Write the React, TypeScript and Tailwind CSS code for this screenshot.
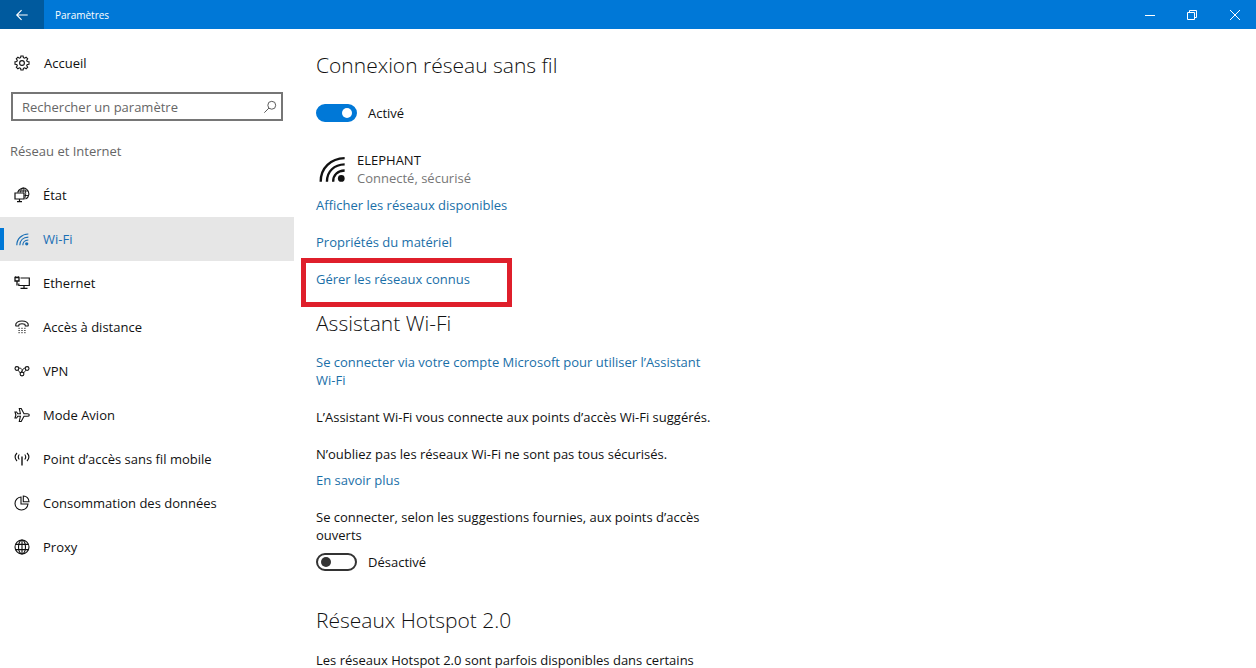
import { useState } from 'react';
import type { ReactNode } from 'react';
import clsx from 'clsx';

function Icon({ size = 16, className, children }: { size?: number; className?: string; children: ReactNode }) {
  return (
    <svg width={size} height={size} viewBox="0 0 16 16" fill="none" stroke="currentColor" strokeWidth="1.1" className={clsx('shrink-0', className)} aria-hidden="true">
      {children}
    </svg>
  );
}

const GearIcon = () => (
  <Icon>
    <path d="M6.9 1h2.2l.3 1.7 1.2.5 1.5-1 1.6 1.6-1 1.5.5 1.2 1.8.3v2.4l-1.8.3-.5 1.2 1 1.5-1.6 1.6-1.5-1-1.2.5L9.1 15H6.900l-.3-1.700-1.200-.5-1.500 1-1.600-1.600 1-1.500-.5-1.200L1 9.200V6.800l1.800-.3.5-1.200-1-1.500 1.600-1.600 1.500 1 1.200-.5z" />
    <circle cx="8" cy="8" r="2.400" />
  </Icon>
);

const StatusIcon = () => (
  <Icon>
    <path d="M3.600 5.500A5.700 5.700 0 1 1 11.500 12" />
    <path d="M6.500 5.500C6.800 2.800 7.900 1 9.200 1s2.500 2.300 2.500 5.500c0 1.900-.3 3.600-.9 4.800M9.200 1v4.500M4.300 4h9.800M10.500 8.500h4" strokeWidth=".9" />
    <path d="M1 6h9v6H1zM5.500 12v2.500M3 14.700h5" strokeWidth="1.200" />
  </Icon>
);

const WifiIcon = ({ size = 16 }: { size?: number }) => (
  <Icon size={size}>
    <path d="M1 15.200C1 7 7 1.500 15.200 1.300M4.700 15.200C4.700 9 9 5.200 15.200 5M8.400 15.200C8.400 11.200 11.200 8.800 15.200 8.600" strokeWidth="1.400" />
    <circle cx="13.200" cy="13.300" r="2" fill="currentColor" stroke="none" />
  </Icon>
);

const EthernetIcon = () => (
  <Icon>
    <path d="M6.500 3h8.800v7.500H4.800V8.500M10 10.500V13M6.500 13.300h7" strokeWidth="1.200" />
    <path d="M1 2.500h4v3.500H1zM3 6v4.500M1.700 1.200v1.300M4.300 1.200v1.300" strokeWidth="1.300" />
  </Icon>
);

const DialupIcon = () => (
  <Icon>
    <path d="M1.700 6.300C1.500 3.500 4.300 2 8 2s6.500 1.500 6.300 4.300l-.3.700h-2.700l-.5-1.800Q8 4.400 5.200 5.200L4.700 7H2z" />
    <path d="M4.500 9.300h1.200M7.400 9.300h1.200M10.300 9.300h1.200M4.500 11.500h1.200M7.400 11.500h1.200M10.300 11.500h1.200M4.500 13.700h1.200M7.400 13.700h1.200M10.300 13.700h1.200" strokeWidth="1" />
  </Icon>
);

const VpnIcon = () => (
  <Icon>
    <circle cx="2.900" cy="5.500" r="1.900" />
    <circle cx="13.100" cy="5.500" r="1.900" />
    <circle cx="8" cy="11" r="1.900" />
    <path d="M4.800 5C7 5 8.200 6 8.200 7.500S7 9 6.500 9.800M11.200 5C9.500 5 8.500 6.500 7.700 8.800M4.200 7.200 6.200 10M11.900 7.200 9.700 9.900" strokeWidth=".9" />
  </Icon>
);

const PlaneIcon = () => (
  <Icon>
    <path d="M15.300 8c0-.8-.9-1.300-2-1.300H10L7.200 1.500H5.300l1.100 5.200H3.800L2.600 5H1l.9 3L1 11h1.600l1.200-1.700h2.600L5.300 14.500h1.900L10 9.300h3.300c1.100 0 2-.5 2-1.300z" />
  </Icon>
);

const HotspotIcon = () => (
  <Icon>
    <path d="M3 2Q-.8 6 3 10M5.300 3.500Q3.200 6 5.300 8.500M13 2Q16.800 6 13 10M10.700 3.500Q12.800 6 10.700 8.500" />
    <path d="M8 5.500V14.500" strokeWidth="1.400" />
  </Icon>
);

const DataIcon = () => (
  <Icon>
    <path d="M7 2A6.500 6.500 0 1 0 14 9H7z" />
    <path d="M9.300 1A5.600 5.600 0 0 1 15 6.700H9.300z" />
  </Icon>
);

const GlobeIcon = () => (
  <Icon>
    <circle cx="8" cy="8" r="7" />
    <ellipse cx="8" cy="8" rx="3.500" ry="7" />
    <path d="M8 1v14M1.800 5.400h12.400M1.800 10.600h12.400" />
  </Icon>
);

const navItems = [
  { label: 'État', icon: <StatusIcon /> },
  { label: 'Wi-Fi', icon: <WifiIcon size={13} />, active: true },
  { label: 'Ethernet', icon: <EthernetIcon /> },
  { label: 'Accès à distance', icon: <DialupIcon /> },
  { label: 'VPN', icon: <VpnIcon /> },
  { label: 'Mode Avion', icon: <PlaneIcon /> },
  { label: 'Point d’accès sans fil mobile', icon: <HotspotIcon /> },
  { label: 'Consommation des données', icon: <DataIcon /> },
  { label: 'Proxy', icon: <GlobeIcon /> },
];

function TitleBar() {
  return (
    <header className="flex h-[29px] shrink-0 items-stretch bg-[#0078d7] text-white">
      <button aria-label="Retour" className="flex w-11 items-center justify-center bg-[#005a9e]">
        <Icon size={14}>
          <path d="M14.500 8H2M7.500 2.500 2 8l5.500 5.500" strokeWidth="1.300" />
        </Icon>
      </button>
      <span className="flex flex-1 items-center pl-[11px] text-[10px]">Paramètres</span>
      <button aria-label="Réduire" className="flex w-[42px] items-center justify-center">
        <svg width="10" height="10" viewBox="0 0 10 10" stroke="currentColor"><path d="M0 5.500h10" /></svg>
      </button>
      <button aria-label="Restaurer" className="flex w-[42px] items-center justify-center">
        <svg width="10" height="10" viewBox="0 0 10 10" fill="none" stroke="currentColor"><path d="M.5 2.500h7v7h-7zM2.500 2.500v-2h7v7h-2" /></svg>
      </button>
      <button aria-label="Fermer" className="flex w-[43px] items-center justify-center">
        <svg width="10" height="10" viewBox="0 0 10 10" stroke="currentColor"><path d="M0 0l10 10M10 0 0 10" /></svg>
      </button>
    </header>
  );
}

function Sidebar() {
  return (
    <aside className="w-[294px] shrink-0 pt-3">
      <a href="#accueil" className="flex h-11 items-center gap-[14px] pl-[14px]">
        <GearIcon />
        Accueil
      </a>
      <label className="mx-[11px] mt-[7px] flex h-[29px] items-center border-2 border-[#767676] pr-1 pl-[9px]">
        <input type="text" aria-label="Rechercher un paramètre" placeholder="Rechercher un paramètre" className="min-w-0 flex-1 outline-none placeholder:text-[#666]" />
        <Icon size={14} className="text-[#555]">
          <circle cx="10" cy="6" r="4.500" />
          <path d="M6.800 9.200 1.500 14.500" />
        </Icon>
      </label>
      <h2 className="mt-[21px] pl-[10px] text-[#666]">Réseau et Internet</h2>
      <nav className="mt-[13px]">
        {navItems.map(item => (
          <a
            key={item.label}
            href="#"
            aria-current={item.active ? 'page' : undefined}
            className={clsx('flex h-11 items-center', item.active && 'bg-[#e6e6e6] text-[#1a6fb5]')}
          >
            <span className={clsx('mr-[10px] h-[22px] w-1', item.active && 'bg-[#0078d7]')} />
            <span className="mr-[13px] flex w-4 justify-center">{item.icon}</span>
            {item.label}
          </a>
        ))}
      </nav>
    </aside>
  );
}

function Toggle({ label, initial }: { label: string; initial: boolean }) {
  const [on, setOn] = useState(initial);
  return (
    <label className="flex h-5 items-center gap-[11px]">
      <input
        type="checkbox"
        role="switch"
        checked={on}
        onChange={() => setOn(!on)}
        className="flex h-[18px] w-[41px] appearance-none items-center rounded-full border-2 border-[#333] px-[3px] before:size-[10px] before:rounded-full before:bg-[#333] checked:justify-end checked:border-[#0078d7] checked:bg-[#0078d7] checked:before:bg-white"
      />
      {label}
    </label>
  );
}

function TextLink({ children }: { children: ReactNode }) {
  return <a href="#" className="text-[#1a6fa8]">{children}</a>;
}

export default function App() {
  return (
    <div className="flex h-screen flex-col overflow-hidden bg-white font-['Open_Sans','Noto_Sans',sans-serif] text-[13px] leading-[18px] text-[#111]">
      <TitleBar />
      <div className="flex min-h-0 flex-1">
        <Sidebar />
        <main className="min-w-0 flex-1 overflow-hidden pt-[22px] pl-[22px]">
          <div className="max-w-[404px]">
            <h1 className="text-[21px] leading-7 font-light">Connexion réseau sans fil</h1>
            <div className="mt-6">
              <Toggle label="Activé" initial />
            </div>
            <div className="mt-7 flex items-center gap-[11px] pl-[3px]">
              <WifiIcon size={27} />
              <div>
                <p>ELEPHANT</p>
                <p className="text-[#777]">Connecté, sécurisé</p>
              </div>
            </div>
            <ul className="mt-[9px] space-y-[19px]">
              <li><TextLink>Afficher les réseaux disponibles</TextLink></li>
              <li><TextLink>Propriétés du matériel</TextLink></li>
              <li className="relative">
                <TextLink>Gérer les réseaux connus</TextLink>
                <span className="pointer-events-none absolute -top-3 -left-[15px] h-[49px] w-[211px] border-5 border-[#df1f2b]" />
              </li>
            </ul>

            <h2 className="mt-[21px] text-[21px] leading-7 font-light">Assistant Wi-Fi</h2>
            <p className="mt-4">
              <TextLink>
                Se connecter via votre compte Microsoft pour utiliser l’Assistant <span className="whitespace-nowrap">Wi-Fi</span>
              </TextLink>
            </p>
            <p className="mt-[19px]">L’Assistant Wi-Fi vous connecte aux points d’accès Wi-Fi suggérés.</p>
            <p className="mt-[19px]">N’oubliez pas les réseaux Wi-Fi ne sont pas tous sécurisés.</p>
            <p className="mt-2"><TextLink>En savoir plus</TextLink></p>
            <p className="mt-[19px]">Se connecter, selon les suggestions fournies, aux points d’accès ouverts</p>
            <div className="mt-2">
              <Toggle label="Désactivé" initial={false} />
            </div>

            <h2 className="mt-[34px] text-[21px] leading-7 font-light">Réseaux Hotspot 2.0</h2>
            <p className="mt-[17px]">Les réseaux Hotspot 2.0 sont parfois disponibles dans certains</p>
          </div>
        </main>
      </div>
    </div>
  );
}
